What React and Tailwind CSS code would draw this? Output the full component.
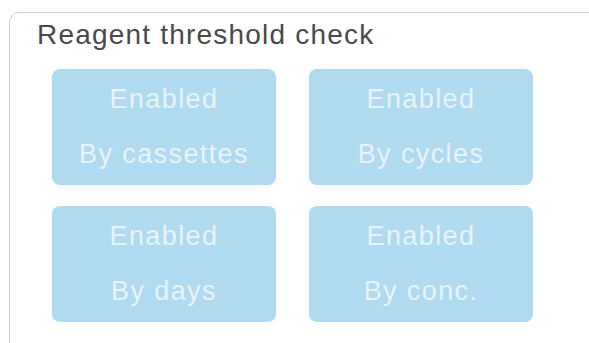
export default function App() {
  const tiles = [
    { top: 'Enabled', bottom: 'By cassettes' },
    { top: 'Enabled', bottom: 'By cycles' },
    { top: 'Enabled', bottom: 'By days' },
    { top: 'Enabled', bottom: 'By conc.' },
  ];

  return (
    <div className="w-[589px] h-[343px] overflow-hidden bg-white font-['Liberation_Sans',Arial,sans-serif]">
      <div className="ml-[9px] mt-[12px] w-[620px] h-[345px] border-[1.5px] border-[#cfcfcf] rounded-[10px] pt-[6px] pl-[27px]">
        <h2 className="text-[28px] leading-[32px] tracking-[1.2px] text-[#4a4a4a]">
          Reagent threshold check
        </h2>

        <div className="mt-[18px] ml-[15px] grid grid-cols-[224px_224px] gap-x-[33px] gap-y-[21px]">
          {tiles.map((t, i) => (
            <button
              key={i}
              className="h-[116px] rounded-[8px] bg-[#afdaf0] flex flex-col items-center justify-center text-[27px] leading-[55px] tracking-[1.4px] text-[#e7f4fb]"
            >
              <span>{t.top}</span>
              <span>{t.bottom}</span>
            </button>
          ))}
        </div>
      </div>
    </div>
  );
}
